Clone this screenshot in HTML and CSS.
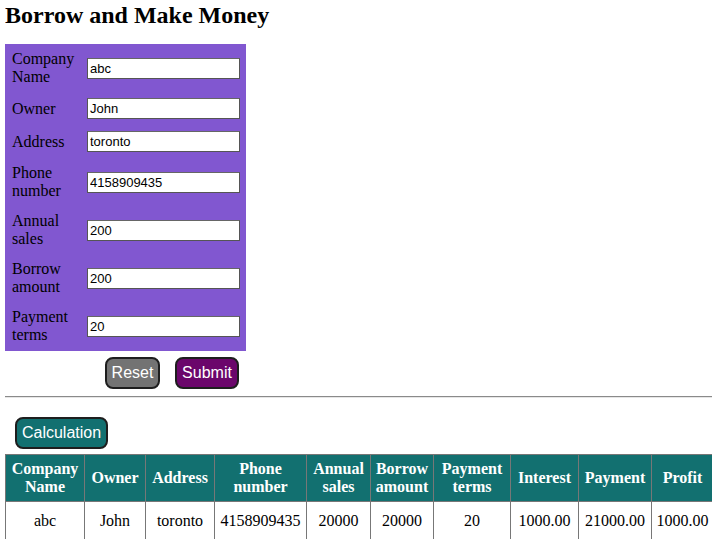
FILE: index.html
```html
<!DOCTYPE html>
<html>
<head>
<meta charset="utf-8">
<title>Borrow and Make Money</title>
<link rel="stylesheet" href="styles.css">
</head>
<body>
<h1 class="title">Borrow and Make Money</h1>
<form class="loan-form">
  <div class="fields">
    <div class="row"><label class="lbl">Company Name</label><input class="inp" type="text" value="abc"></div>
    <div class="row"><label class="lbl">Owner</label><input class="inp" type="text" value="John"></div>
    <div class="row"><label class="lbl">Address</label><input class="inp" type="text" value="toronto"></div>
    <div class="row"><label class="lbl">Phone number</label><input class="inp" type="text" value="4158909435"></div>
    <div class="row"><label class="lbl">Annual sales</label><input class="inp" type="text" value="200"></div>
    <div class="row"><label class="lbl">Borrow amount</label><input class="inp" type="text" value="200"></div>
    <div class="row"><label class="lbl">Payment terms</label><input class="inp" type="text" value="20"></div>
  </div>
  <div class="actions">
    <button type="button" class="btn btn-reset">Reset</button>
    <button type="button" class="btn btn-submit">Submit</button>
  </div>
</form>
<hr class="divider">
<button type="button" class="btn btn-calc">Calculation</button>
<table class="results">
  <thead>
    <tr>
      <th class="c1">Company Name</th>
      <th class="c2">Owner</th>
      <th class="c3">Address</th>
      <th class="c4">Phone number</th>
      <th class="c5">Annual sales</th>
      <th class="c6">Borrow amount</th>
      <th class="c7">Payment terms</th>
      <th class="c8">Interest</th>
      <th class="c9">Payment</th>
      <th class="c10">Profit</th>
    </tr>
  </thead>
  <tbody>
    <tr>
      <td>abc</td>
      <td>John</td>
      <td>toronto</td>
      <td>4158909435</td>
      <td>20000</td>
      <td>20000</td>
      <td>20</td>
      <td>1000.00</td>
      <td>21000.00</td>
      <td>1000.00</td>
    </tr>
  </tbody>
</table>
</body>
</html>
```
FILE: styles.css
```css
html, body {
  overflow: hidden;
}
body {
  margin: 0 0 0 5px;
  font-family: "Liberation Serif", "Times New Roman", serif;
  font-size: 16px;
  color: #000;
  background: #fff;
}
.title {
  font-size: 24px;
  font-weight: bold;
  line-height: 28px;
  margin: 1px 0 15px 0;
}
.loan-form {
  width: 241px;
}
.fields {
  background: #8157d0;
  padding: 0 6px 1px 7px;
}
.row {
  display: grid;
  grid-template-columns: 70px 153px;
  column-gap: 5px;
  align-items: center;
  padding: 6px 0;
}
.lbl {
  line-height: 18px;
}
.inp {
  box-sizing: border-box;
  width: 153px;
  height: 21px;
  margin: 0;
  padding: 1px 2px;
  border: 1px solid #555;
  border-top-color: #666;
  font-family: "Liberation Sans", Arial, sans-serif;
  font-size: 13px;
  color: #000;
  background: #fff;
}
.actions {
  display: flex;
  justify-content: flex-end;
  gap: 15px;
  padding: 6px 7px 0 0;
}
.btn {
  box-sizing: border-box;
  height: 32px;
  border: 2px solid #1e1e1e;
  border-radius: 8px;
  color: #fff;
  font-family: "Liberation Sans", Arial, sans-serif;
  font-size: 16px;
  padding: 0 4px;
  cursor: pointer;
}
.btn-reset {
  width: 55px;
  background: #737373;
}
.btn-submit {
  width: 64px;
  background: #6b066b;
}
.divider {
  margin: 7px 0 0 0;
  border: 0;
  border-top: 1px solid #8a8a8a;
  border-bottom: 1px solid #e6e6e6;
  height: 0;
}
.btn-calc {
  display: block;
  width: 93px;
  height: 32px;
  margin: 19px 0 5px 10px;
  background: #127070;
}
.results {
  border-collapse: collapse;
  table-layout: fixed;
  width: 709px;
}
.results th,
.results td {
  border: 1px solid #777;
  text-align: center;
  padding: 0;
}
.results th {
  background: #127070;
  color: #fff;
  font-weight: bold;
  line-height: 18px;
  height: 46px;
}
.results td {
  line-height: 18px;
  height: 38px;
}
.c1 { width: 78px; }
.c2 { width: 60px; }
.c3 { width: 68px; }
.c4 { width: 91px; }
.c5 { width: 63px; }
.c6 { width: 62px; }
.c7 { width: 76px; }
.c8 { width: 67px; }
.c9 { width: 72px; }
.c10 { width: 61px; }
```
